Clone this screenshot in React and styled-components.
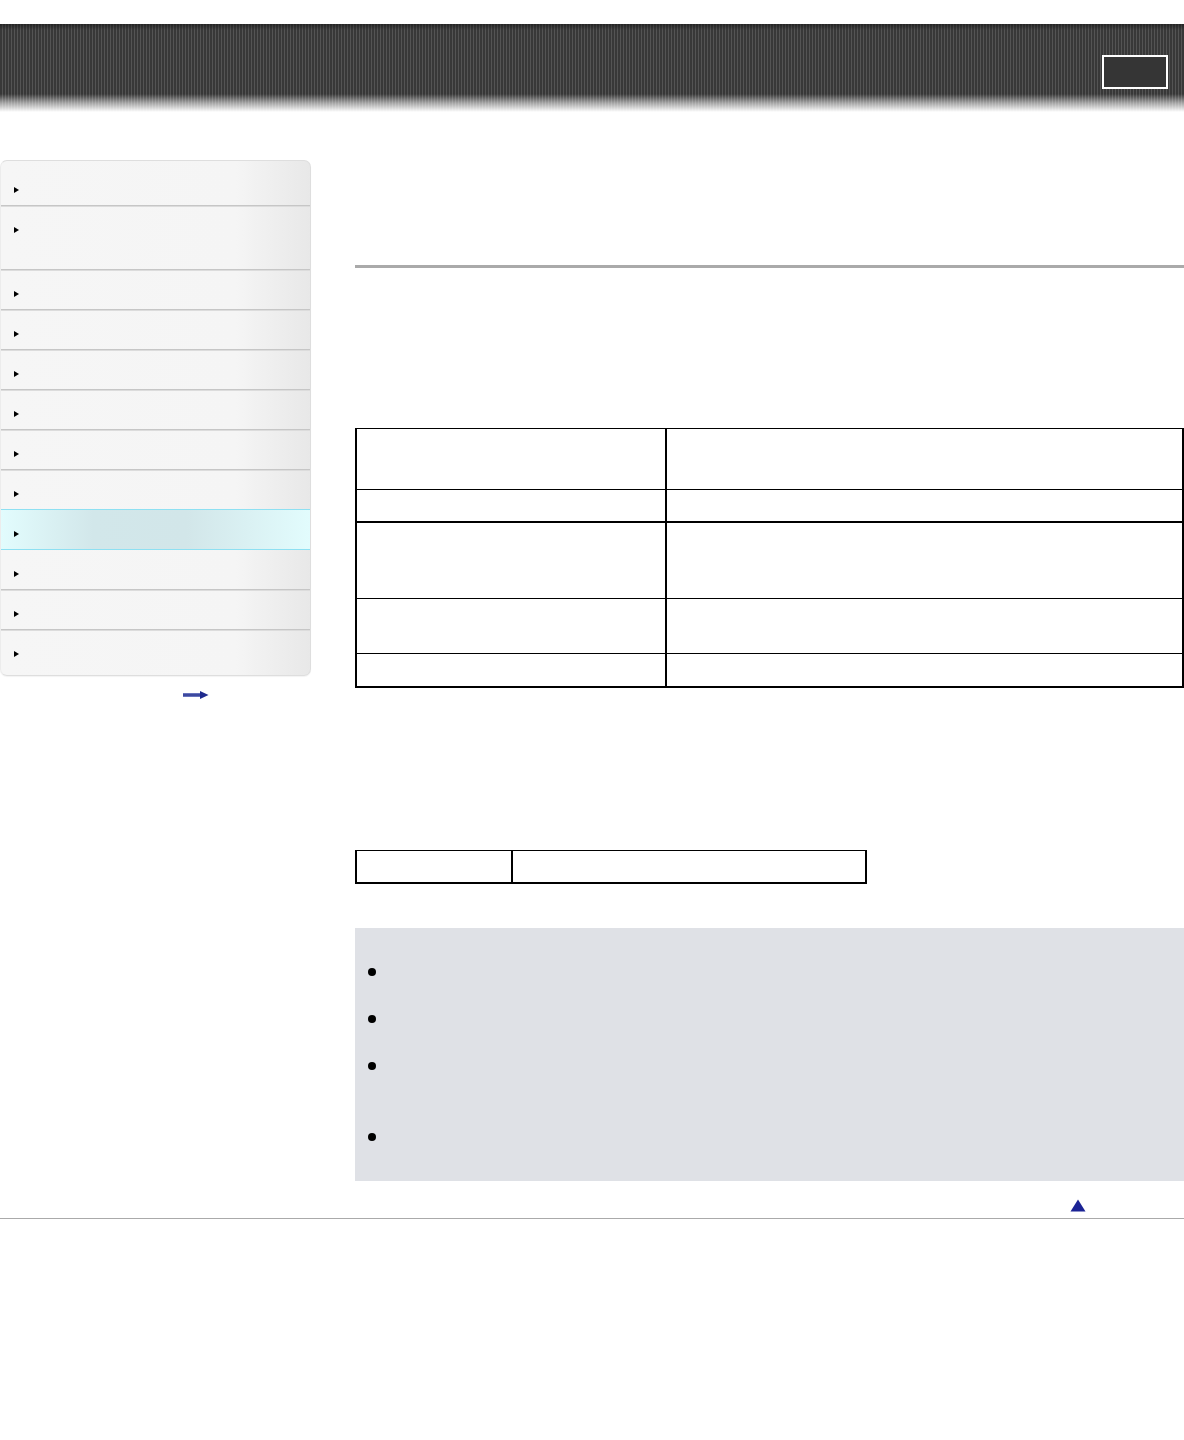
import React from 'react';
import styled, { createGlobalStyle } from 'styled-components';

const GlobalStyle = createGlobalStyle`
  html, body {
    margin: 0;
    padding: 0;
    background: #fff;
    font-family: "Liberation Sans", Arial, sans-serif;
    font-size: 13px;
    color: #000;
  }
`;

const Header = styled.header`
  margin-top: 24px;
  height: 88px;
  box-sizing: border-box;
  display: flex;
  justify-content: flex-end;
  align-items: flex-start;
  padding: 31px 16px 0 0;
  background:
    linear-gradient(to bottom,
      rgba(20, 20, 20, 0.55) 0px,
      rgba(20, 20, 20, 0) 6px,
      rgba(255, 255, 255, 0) 70px,
      rgba(255, 255, 255, 0.55) 79px,
      rgba(255, 255, 255, 1) 88px),
    repeating-linear-gradient(to right,
      #383838 0px, #383838 2px,
      #545454 2px, #545454 3px),
    #3a3a3a;
`;

const SearchBox = styled.div`
  width: 66px;
  height: 34px;
  box-sizing: border-box;
  border: 2px solid #fff;
  background: #353535;
`;

const Layout = styled.div`
  display: flex;
  gap: 44px;
  margin-top: 48px;
`;

const SideColumn = styled.aside`
  width: 311px;
  flex-shrink: 0;
  display: flex;
  flex-direction: column;
`;

const Nav = styled.nav`
  box-sizing: border-box;
  padding: 5px 0 5px;
  border: 1px solid #dedede;
  border-left-color: #ececec;
  border-radius: 7px;
  background: linear-gradient(to right, #f6f6f6 0%, #f5f5f5 76%, #e8e8e8 100%);
  box-shadow: 0 1px 1px rgba(0, 0, 0, 0.05);
`;

const NavItem = styled.div`
  box-sizing: border-box;
  height: ${p => p.$tall ? 64 : 40}px;
  display: flex;
  align-items: flex-start;
  padding: 21px 0 0 13px;
  border-bottom: 1px solid ${p => p.$plain ? 'transparent' : '#c6c6c6'};
  box-shadow: ${p => p.$plain ? 'none' : '0 1px 0 #dcdcdc'};
  ${p => p.$active && `
    border-top: 1px solid #8ee0f2;
    border-bottom: 1px solid #8ee0f2;
    margin-top: -1px;
    height: 41px;
    padding-top: 21px;
    box-shadow: none;
    background: linear-gradient(to right, #e2fcfd 0%, #d2e7ea 30%, #d2e6e9 60%, #e2fcfd 100%);
  `}
`;

const NavArrow = styled.span`
  display: block;
  width: 0;
  height: 0;
  border-top: 3.5px solid transparent;
  border-bottom: 3.5px solid transparent;
  border-left: 5px solid #000;
`;

const MoreLink = styled.div`
  display: flex;
  padding: 15px 0 0 183px;
`;

const Main = styled.main`
  flex: 1;
  display: flex;
  flex-direction: column;
`;

const TitleArea = styled.div`
  height: 105px;
  border-bottom: 3px solid #aaa;
`;

const Spacer = styled.div`
  height: ${p => p.$h}px;
`;

const Table = styled.table`
  border-collapse: collapse;
  width: ${p => p.$width || '100%'};
  border-top: 1px solid #000;
  border-left: 2px solid #000;
  border-right: 2px solid #000;
  border-bottom: 2px solid #000;
  td {
    border-top: 1px solid #000;
    border-bottom: 1px solid #000;
    padding: 0;
  }
  td + td {
    border-left: 2px solid #000;
  }
`;

const Row = styled.tr`
  height: ${p => p.$h}px;
  td {
    ${p => p.$heavy && 'border-bottom: 2px solid #000;'}
  }
`;

const Cell = styled.td`
  width: ${p => p.$w}px;
`;

const Note = styled.div`
  background: #dfe1e6;
  padding: 32px 0 32px 13px;
  display: flex;
  flex-direction: column;
  gap: 23px;
`;

const NoteItem = styled.div`
  display: flex;
  align-items: flex-start;
  height: ${p => (p.$lines || 1) * 24}px;
`;

const Bullet = styled.span`
  display: block;
  flex-shrink: 0;
  width: 8px;
  height: 8px;
  margin-top: 8px;
  border-radius: 50%;
  background: #000;
`;

const TopLinkRow = styled.div`
  display: flex;
  justify-content: flex-end;
  padding: 18px 98px 0 0;
  height: 37px;
  box-sizing: border-box;
`;

const Footer = styled.div`
  border-top: 1px solid #aaa;
  height: 220px;
`;

function ArrowRight() {
  return (
    <svg width="26" height="8" viewBox="0 0 26 8">
      <defs>
        <linearGradient id="shaft" x1="0" y1="0" x2="0" y2="1">
          <stop offset="0" stopColor="#7d88cc" />
          <stop offset="0.5" stopColor="#27348f" />
          <stop offset="1" stopColor="#7d88cc" />
        </linearGradient>
      </defs>
      <rect x="0" y="2" width="19" height="4" fill="url(#shaft)" />
      <path d="M17 0 L25.5 4 L17 8 Z" fill="#1f2a8e" />
    </svg>
  );
}

function ArrowUp() {
  return (
    <svg width="16" height="13" viewBox="0 0 16 13">
      <path d="M8 0.5 L15.5 12.5 L0.5 12.5 Z" fill="#1b2395" />
    </svg>
  );
}

const navRows = [
  {}, { tall: true }, {}, {}, {}, {}, {}, { beforeActive: true }, { active: true }, {}, {}, { last: true }
];

function App() {
  return (
    <>
      <GlobalStyle />
      <Header>
        <SearchBox />
      </Header>
      <Layout>
        <SideColumn>
          <Nav>
            {navRows.map((r, i) => (
              <NavItem
                key={i}
                $tall={r.tall}
                $active={r.active}
                $plain={r.last || r.beforeActive}
              >
                <NavArrow />
              </NavItem>
            ))}
          </Nav>
          <MoreLink>
            <ArrowRight />
          </MoreLink>
        </SideColumn>
        <Main>
          <TitleArea />
          <Spacer $h={160} />
          <Table>
            <tbody>
              <Row $h={61}><Cell $w={308} /><Cell /></Row>
              <Row $h={32} $heavy><Cell /><Cell /></Row>
              <Row $h={77}><Cell /><Cell /></Row>
              <Row $h={55}><Cell /><Cell /></Row>
              <Row $h={33}><Cell /><Cell /></Row>
            </tbody>
          </Table>
          <Spacer $h={162} />
          <Table $width="512px">
            <tbody>
              <Row $h={33}><Cell $w={154} /><Cell /></Row>
            </tbody>
          </Table>
          <Spacer $h={44} />
          <Note>
            <NoteItem><Bullet /></NoteItem>
            <NoteItem><Bullet /></NoteItem>
            <NoteItem $lines={2}><Bullet /></NoteItem>
            <NoteItem><Bullet /></NoteItem>
          </Note>
          <TopLinkRow>
            <ArrowUp />
          </TopLinkRow>
        </Main>
      </Layout>
      <Footer />
    </>
  );
}

export default App;
